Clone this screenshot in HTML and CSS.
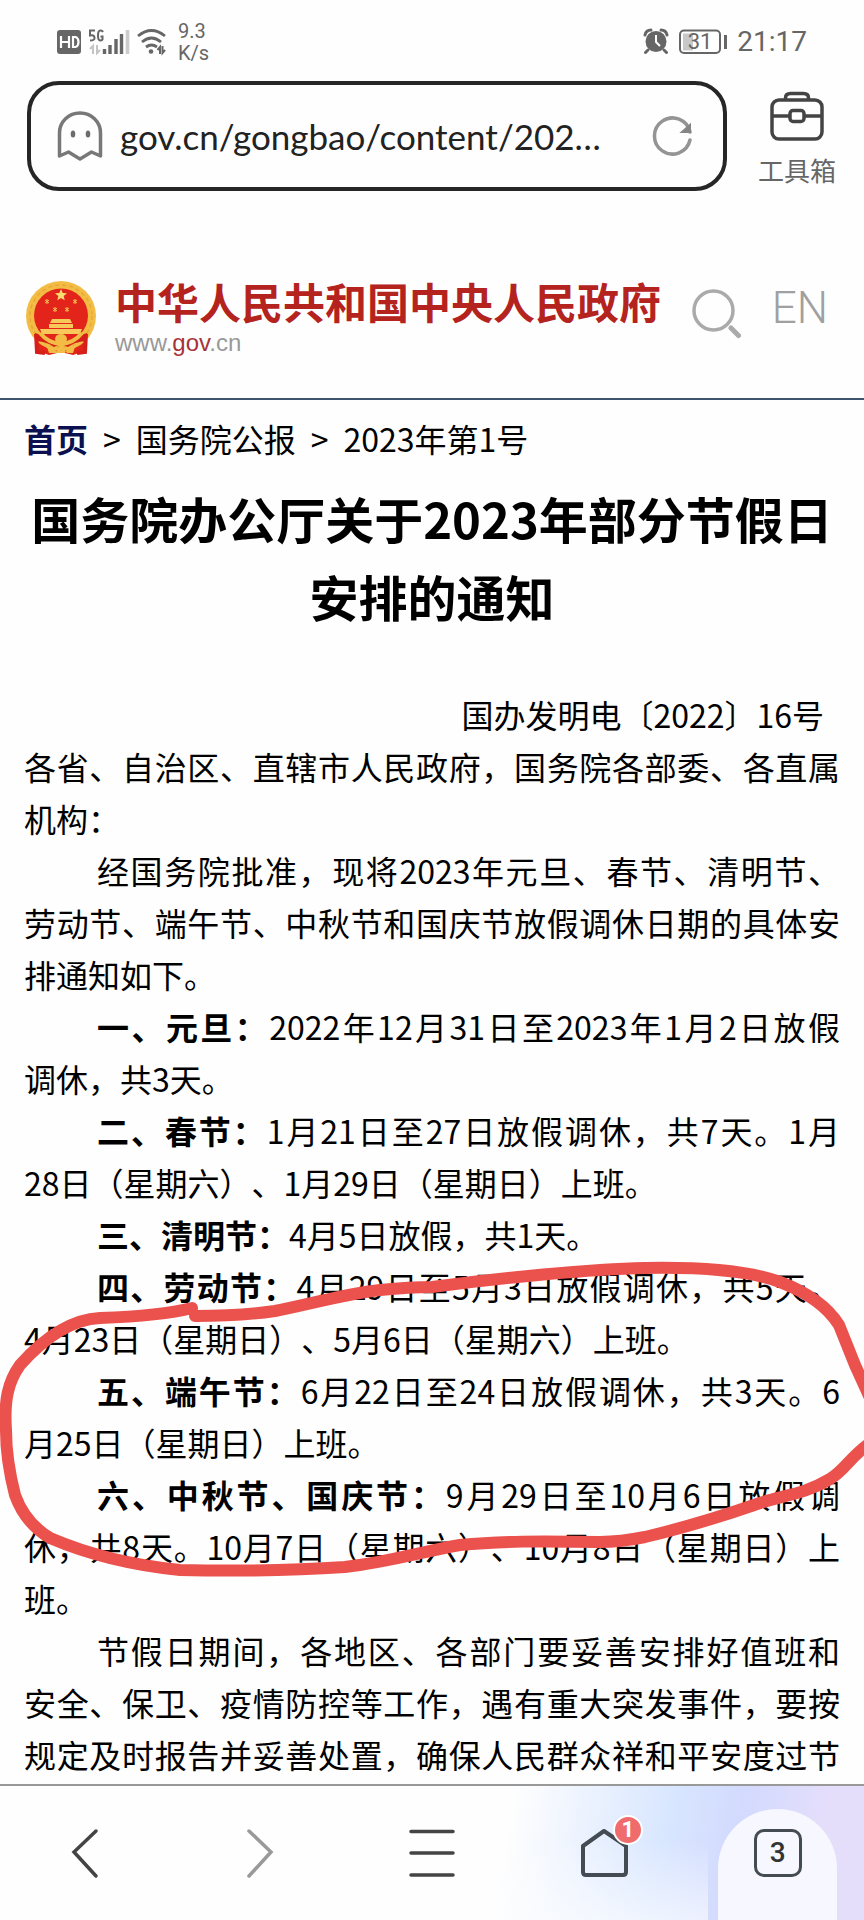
FILE: index.html
```html
<!DOCTYPE html>
<html lang="zh-CN">
<head>
<meta charset="utf-8">
<meta name="viewport" content="width=device-width, initial-scale=1">
<title>国务院办公厅关于2023年部分节假日安排的通知</title>
<link rel="stylesheet" href="styles.css">
</head>
<body>
<header class="status">
  <div class="status-left">
    <svg class="ico" width="112" height="28" viewBox="56 28 112 28" aria-hidden="true">
      <rect x="57" y="30" width="24" height="24" rx="3" fill="#666"/>
      <path d="M61 36v12M69 36v12M61 42h8M73 37v10h2.500q3-1 3-5t-3-5z" fill="none" stroke="#fff" stroke-width="2.200"/>
      <path d="M95 30.500h-5v5q4-1 4.500 2t-4.500 3M103 32q-1-2-3-1.500-2 .5-2 5t2 5q2 0 2.500-1v-3h-2" fill="none" stroke="#666" stroke-width="2"/>
      <path d="M90 49l3-3v8M100 50l-3 3v-8" fill="none" stroke="#c4c4c4" stroke-width="2"/>
      <path d="M104.500 49v5M110 45v9M116 39v15M121.500 34v20" stroke="#666" stroke-width="3.400"/>
      <path d="M127.500 30v24" stroke="#ccc" stroke-width="3.600"/>
      <g fill="none" stroke="#666" stroke-width="2.800">
        <path d="M138 36q13.500-11 27 0M142 42q9.500-8 19 0M146 47q5.500-4 11 0"/>
        <path d="M157.500 50l2.500-3v7M165 50l-2.500 3v-7" stroke-width="2"/>
      </g>
      <circle cx="151" cy="51.500" r="2.300" fill="#666"/>
    </svg>
    <div class="speed">9.3<br>K/s</div>
  </div>
  <div class="status-right">
    <svg class="ico" width="86" height="28" viewBox="643 28 86 28" aria-hidden="true">
      <circle cx="656" cy="41.500" r="10.500" fill="#666"/>
      <path d="M645 35q1-5 6-5M667 35q-1-5-6-5M648 50l-2.500 2.500M664 50l2.500 2.500" fill="none" stroke="#666" stroke-width="3" stroke-linecap="round"/>
      <path d="M656 35v7l4 4" fill="none" stroke="#fff" stroke-width="2"/>
      <rect x="680" y="30.500" width="40" height="22.500" rx="4" fill="#fff" stroke="#666" stroke-width="2"/>
      <path d="M683 33.500h10v17h-10z" fill="#c8c8c8"/>
      <path d="M725.500 35v14" stroke="#666" stroke-width="3"/>
      <text x="700" y="49" class="battery-text">31</text>
    </svg>
    <time class="clock">21:17</time>
  </div>
</header>

<div class="toolbar">
  <form class="address">
    <svg class="ico" width="46" height="50" viewBox="0 0 46 50" aria-hidden="true">
      <path d="M2.500 45V22a20.500 20 0 0 1 41 0v23l-9-4-11.500 7-11.500-7z" fill="none" stroke="#787878" stroke-width="3.500" stroke-linejoin="round"/>
      <ellipse cx="16" cy="23" rx="2.300" ry="3.500" fill="#6c6c6c"/><ellipse cx="31" cy="23" rx="2.300" ry="3.500" fill="#6c6c6c"/>
    </svg>
    <input class="address-input" type="text" aria-label="网址" value="gov.cn/gongbao/content/202…">
    <button class="plain" type="button" aria-label="刷新">
      <svg class="ico" width="44" height="44" viewBox="0 0 44 44"><path d="M39 18A18 18 0 1 0 39 26" fill="none" stroke="#949494" stroke-width="3.500" stroke-linecap="round"/><path d="M39 11v7h-8z" fill="#858585" stroke="#858585" stroke-width="2"/></svg>
    </button>
  </form>
  <button class="plain toolbox" type="button">
    <svg class="ico" width="54" height="52" viewBox="0 0 54 52" fill="none" stroke="#444" stroke-width="3.500" aria-hidden="true"><rect x="2" y="9" width="50" height="39" rx="7"/><path d="M15.500 9V7q0-4.500 5-4.500h13q5 0 5 4.500v2M2 25h18M34 25h18"/><rect x="20" y="19.500" width="14" height="11" rx="3"/></svg>
    <span>工具箱</span>
  </button>
</div>

<div class="site">
  <svg class="emblem" width="72" height="78" viewBox="0 0 72 78" aria-hidden="true">
    <path d="M10 52l2 20 12 4 12-3 12 3 12-4 2-20z" fill="#e3241b"/>
    <circle cx="36" cy="37" r="35" fill="#f3bd45"/>
    <circle cx="36" cy="37" r="31" fill="none" stroke="#e6a838" stroke-width="1.500" stroke-dasharray="4 3"/>
    <circle cx="36" cy="36.500" r="27" fill="#e3241b"/>
    <path d="M36 10l1.700 4 4.300.3-3.300 2.800 1 4.200-3.700-2.300-3.700 2.300 1-4.200-3.300-2.800 4.300-.3z" fill="#fbdc70"/>
    <path d="M20 21l4 3m-4 0l4-3m-2-1v5M48 21l4 3m-4 0l4-3m-2-1v5M28 29l4 3m-4 0l4-3m-2-1v5M40 29l4 3m-4 0l4-3m-2-1v5" stroke="#f5c44e" stroke-width="1"/>
    <path d="M27 40h18l2 4h-22zM24 45h24v4H24zM15 50h42l-2 5H17z" fill="#f6c95a"/>
    <path d="M10 54q12 3 18 9l8-6 8 6q6-6 18-9l-1 8q-12 1-18 6l-7-3-7 3q-6-5-18-6z" fill="#d61f1a"/>
    <path d="M15 54q8 10 21 11 13-1 21-11" fill="none" stroke="#f3bd45" stroke-width="4"/>
    <ellipse cx="36" cy="60" rx="6" ry="5" fill="#f3bd45"/>
    <path d="M22 68q8 0 10 6h-8zM50 68q-8 0-10 6h8zM36 66l6 8H30z" fill="#f3bd45"/>
    <path d="M11 55l1 18 8 1M61 55l-1 18-8 1" fill="none" stroke="#d61f1a" stroke-width="4"/>
  </svg>
  <div class="brand">
    <div class="brand-name">中华人民共和国中央人民政府</div>
    <div class="brand-url">www.<b>gov</b>.cn</div>
  </div>
  <button class="plain search" type="button" aria-label="搜索">
    <svg class="ico" width="50" height="50" viewBox="0 0 50 50" fill="none" stroke="#aaa"><circle cx="21.500" cy="21.500" r="19.500" stroke-width="3.500"/><path d="M39 39l7.500 7.500" stroke-width="5" stroke-linecap="round"/></svg>
  </button>
  <a class="lang" href="#">EN</a>
</div>

<main class="page">
  <nav class="crumbs" aria-label="路径"><a class="home" href="#">首页</a><span>&gt;</span><a href="#">国务院公报</a><span>&gt;</span><a href="#">2023年第1号</a></nav>
  <h1 class="title">国务院办公厅关于2023年部分节假日<br>安排的通知</h1>
  <p class="number">国办发明电〔2022〕16号</p>
  <p class="text"><span>各省、自治区、直辖市人民政府，国务院各部委、各直属</span><span>机构：</span></p>
  <p class="text indent"><span>经国务院批准，现将2023年元旦、春节、清明节、</span><span>劳动节、端午节、中秋节和国庆节放假调休日期的具体安</span><span>排通知如下。</span></p>
  <p class="text indent"><span><b>一、元旦：</b>2022年12月31日至2023年1月2日放假</span><span>调休，共3天。</span></p>
  <p class="text indent"><span><b>二、春节：</b>1月21日至27日放假调休，共7天。1月</span><span>28日（星期六）、1月29日（星期日）上班。</span></p>
  <p class="text indent"><span><b>三、清明节：</b>4月5日放假，共1天。</span></p>
  <p class="text indent"><span><b>四、劳动节：</b>4月29日至5月3日放假调休，共5天。</span><span>4月23日（星期日）、5月6日（星期六）上班。</span></p>
  <p class="text indent"><span><b>五、端午节：</b>6月22日至24日放假调休，共3天。6</span><span>月25日（星期日）上班。</span></p>
  <p class="text indent"><span><b>六、中秋节、国庆节：</b>9月29日至10月6日放假调</span><span>休，共8天。10月7日（星期六）、10月8日（星期日）上</span><span>班。</span></p>
  <p class="text indent open"><span>节假日期间，各地区、各部门要妥善安排好值班和</span><span>安全、保卫、疫情防控等工作，遇有重大突发事件，要按</span><span>规定及时报告并妥善处置，确保人民群众祥和平安度过节</span></p>
  <svg class="marker" viewBox="0 1250 864 330" preserveAspectRatio="none" aria-hidden="true">
    <path d="M195 1316Q240 1316 275 1311C310 1304 350 1293 380 1290Q410 1287 432 1287C500 1278 590 1269 645 1268C700 1267 750 1271 780 1282Q822 1298 839 1325Q847 1345 855 1365L870 1398M870 1443C850 1457 845 1470 830 1479C805 1494 785 1495 760 1503Q700 1524 645 1537Q620 1542 600 1542C540 1541 500 1541 460 1545C420 1552 390 1562 345 1567Q270 1572 180 1570C130 1565 85 1553 50 1538Q25 1523 15 1495Q6 1460 6 1430C4 1400 8 1382 20 1365Q60 1320 100 1318C130 1317 165 1315 192 1308" fill="none" stroke="#eb524d" stroke-width="12" stroke-linecap="round" stroke-linejoin="round"/>
  </svg>
</main>

<nav class="bottom" aria-label="浏览器">
  <button class="plain" type="button" aria-label="后退"><svg class="ico" width="56" height="56" viewBox="0 0 56 56"><path d="M38 6L16 27l22 24" fill="none" stroke="#444" stroke-width="3.500" stroke-linecap="round"/></svg></button>
  <button class="plain" type="button" aria-label="前进"><svg class="ico" width="56" height="56" viewBox="0 0 56 56"><path d="M18 6l22 21-22 24" fill="none" stroke="#999" stroke-width="3.500" stroke-linecap="round"/></svg></button>
  <button class="plain" type="button" aria-label="菜单"><svg class="ico" width="56" height="56" viewBox="0 0 56 56"><path d="M7 6.500h42M7 28h42M7 50h42" stroke="#444" stroke-width="3.500" stroke-linecap="round"/></svg></button>
  <button class="plain home-tab" type="button" aria-label="主页"><svg class="ico" width="56" height="56" viewBox="0 0 56 56"><path d="M6 21L27 6l22 15v26q0 3-3 3H9q-3 0-3-3z" fill="none" stroke="#444b52" stroke-width="4" stroke-linejoin="round"/></svg><span class="badge">1</span></button>
  <button class="plain tabs" type="button" aria-label="标签页"><span class="tab-count">3</span></button>
</nav>
</body>
</html>
```
FILE: styles.css
```css
* {
  box-sizing: border-box;
}

body {
  margin: 0;
  min-height: 100vh;
  display: flex;
  flex-direction: column;
  overflow-x: hidden;
  background: #fefefe;
  color: #000;
  font-family: "Noto Sans CJK SC", sans-serif;
  font-size: 32px;
  line-height: 52px;
}

a {
  color: inherit;
  text-decoration: none;
}

p,
h1 {
  margin: 0;
}

.ico {
  display: block;
  flex: none;
}

.plain {
  border: 0;
  padding: 0;
  background: none;
  font: inherit;
  color: inherit;
}

.status {
  display: flex;
  justify-content: space-between;
  align-items: center;
  height: 81px;
  padding: 3px 57px 0 56px;
  color: #666;
  font-family: Roboto, sans-serif;
}

.status-left,
.status-right {
  display: flex;
  align-items: center;
  gap: 10px;
}

.status-right {
  gap: 8px;
}

.speed {
  font-size: 20px;
  line-height: 22px;
}

.battery-text {
  font-size: 22px;
  text-anchor: middle;
  fill: #666;
}

.clock {
  font-size: 28px;
}

.toolbar {
  display: flex;
  align-items: center;
  padding: 0 28px 0 27px;
}

.address {
  display: flex;
  align-items: center;
  flex: 1;
  min-width: 0;
  height: 110px;
  padding: 0 28px 0 26px;
  border: 4px solid #262626;
  border-radius: 32px;
}

.address-input {
  flex: 1;
  min-width: 0;
  margin-left: 17px;
  padding: 0;
  border: 0;
  outline: 0;
  background: none;
  color: #222;
  font: 35px Lato, sans-serif;
}

.toolbox {
  display: flex;
  flex-direction: column;
  align-items: center;
  gap: 8px;
  margin-left: 31px;
  padding-top: 8px;
  color: #666;
  font-size: 26px;
  line-height: 38px;
}

.site {
  display: flex;
  align-items: flex-start;
  height: 209px;
  padding: 80px 36px 0 25px;
  border-bottom: 2px solid #3f546f;
}

.emblem {
  flex: none;
  margin-top: 8px;
}

.brand {
  margin-left: 18px;
  white-space: nowrap;
}

.brand-name {
  color: #b5231f;
  font-size: 42px;
  font-weight: 700;
  line-height: 60px;
}

.brand-url {
  color: #999;
  font-family: "Liberation Sans", sans-serif;
  font-size: 24px;
  line-height: 24px;
}

.brand-url b {
  color: #a93238;
  font-weight: 400;
}

.search {
  margin: 18px 0 0 31px;
}

.lang {
  margin: 11px 0 0 auto;
  color: #a0a0a0;
  font-family: Roboto, sans-serif;
  font-size: 44px;
  font-weight: 300;
}

.page {
  position: relative;
  flex: 1;
  padding: 12px 24px 0;
  text-spacing-trim: space-all;
}

.crumbs {
  display: flex;
  gap: 15px;
}

.home {
  color: #0b1150;
  font-weight: 700;
}

.title {
  padding: 15px 0 53px;
  font-size: 49px;
  font-weight: 700;
  line-height: 78px;
  text-align: center;
  white-space: nowrap;
}

.number {
  padding-right: 16px;
  text-align: right;
}

.text span {
  display: block;
  text-align: justify;
  text-align-last: justify;
  white-space: nowrap;
}

.text span:last-child {
  text-align-last: start;
}

.open span:last-child {
  text-align-last: justify;
}

.indent span:first-child {
  text-indent: 73px;
}

.marker {
  position: absolute;
  left: 0;
  top: 850px;
  width: 100%;
  height: 330px;
  pointer-events: none;
}

.bottom {
  display: grid;
  grid-template-columns: repeat(5, 1fr);
  height: 136px;
  border-top: 2px solid #999;
  background:
    linear-gradient(to top, #fefefe99, #fefefe00 60%) left / 82% 100% no-repeat,
    linear-gradient(100deg, #fefefe 58%, #d8e6ff 76%, #d3dafe 84%, #e5defb 94%);
}

.bottom .plain {
  display: flex;
  justify-content: center;
  align-items: center;
}

.bottom .home-tab {
  position: relative;
}

.badge {
  position: absolute;
  left: 50%;
  top: 29px;
  width: 30px;
  height: 30px;
  margin-left: 8px;
  border: 2px solid #fff;
  border-radius: 50%;
  background: #f06b6b;
  color: #fff;
  font: 700 22px/26px Roboto, sans-serif;
}

.bottom .tabs {
  width: 119px;
  margin-top: 23px;
  padding-bottom: 23px;
  justify-self: center;
  border-radius: 60px 60px 0 0;
  background: #f6f7ff;
}

.tab-count {
  width: 48px;
  height: 48px;
  border: 3px solid #444b52;
  border-radius: 10px;
  color: #333;
  font: 500 28px/42px Roboto, sans-serif;
}
```
